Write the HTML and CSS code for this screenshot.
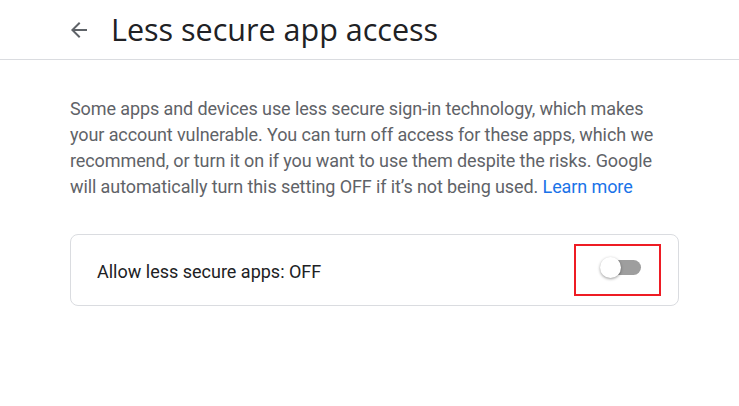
FILE: index.html
```html
<!DOCTYPE html>
<html>
<head>
<meta charset="utf-8">
<link rel="stylesheet" href="styles.css">
</head>
<body>
<header class="header">
  <svg class="back" viewBox="0 0 24 24" width="24" height="24"><path d="M20 11H7.83l5.59-5.59L12 4l-8 8 8 8 1.41-1.41L7.83 13H20v-2z" fill="#5f6368"/></svg>
  <h1 class="title">Less secure app access</h1>
</header>
<main class="content">
  <p class="desc">Some apps and devices use less secure sign-in technology, which makes your account vulnerable. You can turn off access for these apps, which we recommend, or turn it on if you want to use them despite the risks. Google will automatically turn this setting OFF if it’s not being used. <a class="link" href="#">Learn more</a></p>
  <div class="card">
    <span class="label">Allow less secure apps: OFF</span>
    <div class="highlight">
      <div class="toggle"><span class="track"></span><span class="knob"></span></div>
    </div>
  </div>
</main>
</body>
</html>
```
FILE: styles.css
```css
html, body { margin: 0; padding: 0; background: #fff; }
body { font-family: Roboto, "Liberation Sans", sans-serif; }
.header {
  display: flex;
  align-items: center;
  height: 59px;
  border-bottom: 1px solid #dadce0;
  padding-left: 67px;
}
.back { flex: none; }
.title {
  margin: -2px 0 0 20px;
  font-family: "Open Sans", Roboto, sans-serif;
  font-weight: 400;
  font-size: 30.5px;
  color: #202124;
}
.content { padding: 36px 0 0 70px; width: 609px; }
.desc {
  margin: 0;
  font-size: 18px;
  line-height: 26px;
  color: #5f6368;
  letter-spacing: -0.1px;
}
.link { color: #1a73e8; text-decoration: none; }
.card {
  margin-top: 34px;
  height: 70px;
  border: 1px solid #dadce0;
  border-radius: 8px;
  display: flex;
  align-items: center;
  justify-content: space-between;
  padding-left: 26px;
  padding-right: 17px;
}
.label { font-size: 18px; color: #202124; padding-top: 3px; }
.highlight {
  width: 83px;
  height: 48px;
  border: 2px solid #ee1c24;
  display: flex;
  align-items: center;
  justify-content: center;
}
.toggle { position: relative; width: 41px; height: 22px; margin: -7px 0 0 6px; }
.track {
  position: absolute; left: 1px; top: 4px; width: 40px; height: 15px;
  border-radius: 8px; background: #9e9e9e;
}
.knob {
  position: absolute; left: 0; top: 1px; width: 21px; height: 21px;
  border-radius: 50%; background: #fff;
  box-shadow: 0 1px 3px rgba(0,0,0,0.4);
}
```
